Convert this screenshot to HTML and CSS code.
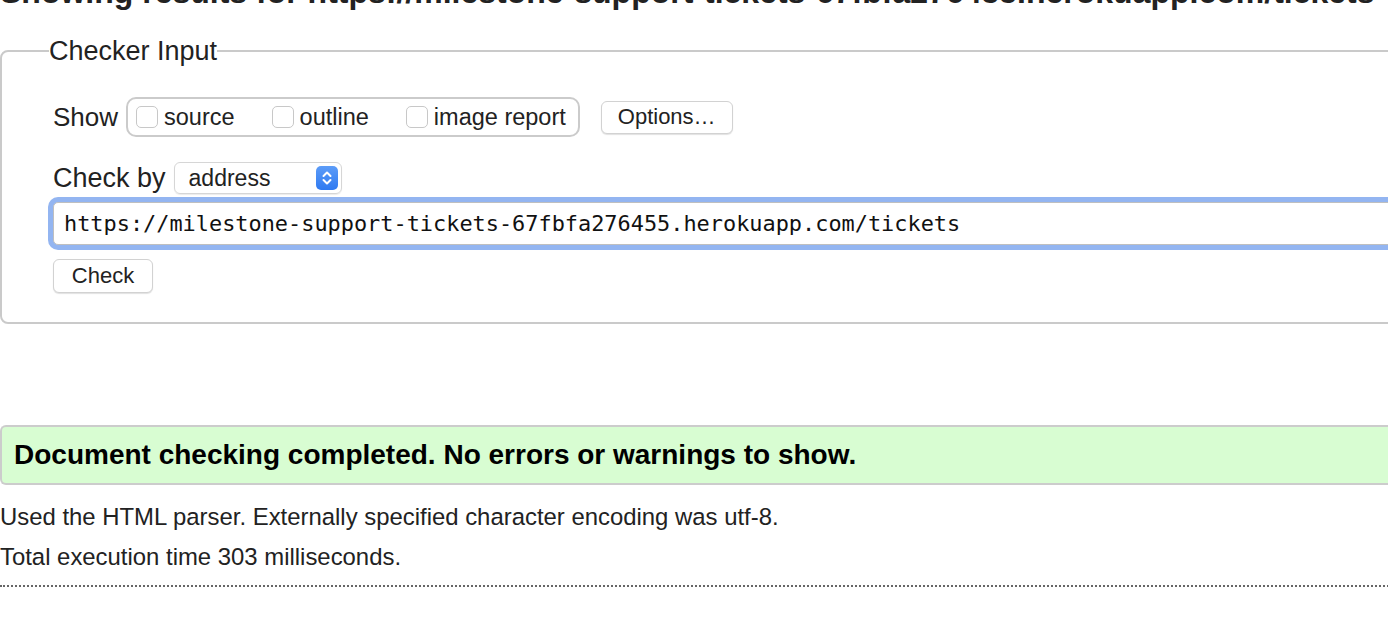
FILE: index.html
```html
<!DOCTYPE html>
<html lang="en">
<head>
<meta charset="utf-8">
<title>Nu Html Checker</title>
<link rel="stylesheet" href="styles.css">
</head>
<body>
<div class="page">
  <h2 class="title">Showing results for https://milestone-support-tickets-67fbfa276455.herokuapp.com/tickets</h2>
  <fieldset class="checker">
    <legend class="legend">Checker Input</legend>
    <div class="row show-row">
      <span class="label">Show</span>
      <div class="opts">
        <label class="opt"><input type="checkbox" class="cb">source</label>
        <label class="opt"><input type="checkbox" class="cb">outline</label>
        <label class="opt"><input type="checkbox" class="cb">image report</label>
      </div>
      <button class="btn btn-options" type="button">Options…</button>
    </div>
    <div class="row by-row">
      <span class="label label-by">Check by</span>
      <div class="select">
        <span class="select-text">address</span>
        <span class="stepper">
          <svg width="22" height="24" viewBox="0 0 22 24" aria-hidden="true">
            <path d="M7.5 10 L11 6.5 L14.5 10" fill="none" stroke="#fff" stroke-width="2" stroke-linecap="round" stroke-linejoin="round"/>
            <path d="M7.5 14 L11 17.5 L14.5 14" fill="none" stroke="#fff" stroke-width="2" stroke-linecap="round" stroke-linejoin="round"/>
          </svg>
        </span>
      </div>
    </div>
    <div class="url-wrap">
      <input class="url" type="text" value="https://milestone-support-tickets-67fbfa276455.herokuapp.com/tickets">
    </div>
    <button class="btn btn-check" type="button">Check</button>
  </fieldset>
  <div class="result">Document checking completed. No errors or warnings to show.</div>
  <p class="info">Used the HTML parser. Externally specified character encoding was utf-8.</p>
  <p class="info">Total execution time 303 milliseconds.</p>
  <hr class="dotted">
</div>
</body>
</html>
```

FILE: styles.css
```css
html, body {
  margin: 0;
  padding: 0;
  background: #fff;
  overflow: hidden;
}

body {
  font-family: "Liberation Sans", Arial, sans-serif;
  color: #222;
  width: 1388px;
  height: 620px;
}

.page {
  width: 1500px;
  margin-top: -26px;
}

.title {
  margin: 0;
  font-size: 32px;
  line-height: 36px;
  font-weight: bold;
  color: #222;
  white-space: nowrap;
}

.checker {
  margin: 26px 0 0 0;
  padding: 31px 0 29px 47px;
  border: 2px solid #cacaca;
  border-radius: 8px;
  min-width: 0;
}

.legend {
  padding: 0;
  font-size: 27px;
  line-height: 30px;
  color: #222;
}

.row {
  display: flex;
  align-items: center;
  margin-left: 4px;
}

.label {
  font-size: 26px;
  margin-right: 8px;
  color: #222;
}

.label-by {
  font-size: 27px;
}

.opts {
  display: flex;
  align-items: center;
  height: 36px;
  padding: 0 12px 0 8px;
  border: 2px solid #cbcbcb;
  border-radius: 10px;
}

.opt {
  display: flex;
  align-items: center;
  font-size: 23.5px;
  color: #222;
  margin-right: 37px;
}

.opt:last-child {
  margin-right: 0;
}

.cb {
  appearance: none;
  -webkit-appearance: none;
  width: 22px;
  height: 22px;
  margin: 0 6px 0 0;
  border: 1px solid #c8c8c8;
  border-radius: 5px;
  background: #fff;
}

.btn {
  font-family: "Liberation Sans", Arial, sans-serif;
  font-size: 22px;
  color: #222;
  background: #fff;
  border: 1px solid #d2d2d2;
  border-radius: 6px;
  box-shadow: 0 1px 1px rgba(0, 0, 0, 0.12);
  padding: 0 15px;
  cursor: pointer;
}

.btn-options {
  height: 33px;
  margin-left: 21px;
  padding: 0 16px;
}

.by-row {
  margin-top: 25px;
}

.select {
  display: flex;
  align-items: center;
  justify-content: space-between;
  height: 30px;
  border: 1px solid #d6d6d6;
  border-radius: 6px;
  box-shadow: 0 1px 1px rgba(0, 0, 0, 0.08);
  padding: 0 3px 0 14px;
  box-sizing: content-box;
  width: 149px;
}

.select-text {
  font-size: 23px;
  color: #222;
}

.stepper {
  display: flex;
  width: 22px;
  height: 24px;
  border-radius: 5px;
  background: linear-gradient(#5c9cf8, #2f7af1);
}

.url-wrap {
  margin-top: 8px;
  margin-left: 4px;
}

.url {
  display: block;
  box-sizing: border-box;
  width: 1600px;
  height: 43px;
  margin: 0;
  padding: 0 10px;
  border: 1px solid #bfbfbf;
  border-radius: 5px;
  box-shadow: 0 0 0 5px #93b5f1;
  outline: none;
  font-family: "DejaVu Sans Mono", "Liberation Mono", monospace;
  font-size: 21.9px;
  color: #111;
  background: #fff;
}

.btn-check {
  display: block;
  margin: 14px 0 0 4px;
  height: 34px;
  width: 100px;
  padding: 0;
}

.result {
  margin-top: 101px;
  height: 56px;
  line-height: 56px;
  border-top: 2px solid #cccccc;
  border-bottom: 2px solid #cccccc;
  border-left: 2px solid #cccccc;
  border-radius: 6px 0 0 6px;
  background: #d8fdd2;
  padding-left: 12px;
  font-size: 28px;
  font-weight: bold;
  color: #000;
}

.info {
  margin: 0;
  font-size: 23.9px;
  line-height: 40px;
  color: #222;
}

.result + .info {
  margin-top: 12px;
}

.dotted {
  margin: 8px 0 0 0;
  border: 0;
  border-top: 2px dotted #666;
  height: 0;
}
```
